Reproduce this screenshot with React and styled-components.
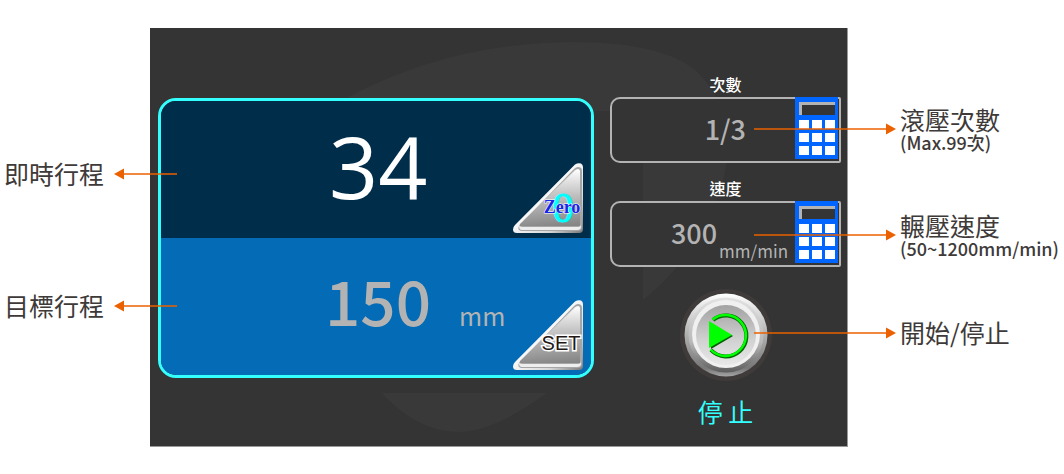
import React, { useState } from "react";
import styled, { createGlobalStyle } from "styled-components";

const GlobalStyle = createGlobalStyle`
  * {
    box-sizing: border-box;
  }
  body {
    margin: 0;
    background-color: #ffffff;
    font-family: "Noto Sans CJK TC", "Noto Sans", sans-serif;
  }
  button {
    border: none;
    padding: 0;
    background: none;
    cursor: pointer;
    font: inherit;
  }
  svg {
    display: block;
  }
`;

const Page = styled.main`
  display: grid;
  grid-template-columns: 150px minmax(0, 1fr) 216px;
  padding: 28px 0;
`;

const Notes = styled.aside`
  display: flex;
  flex-direction: column;
  position: relative;
  z-index: 1;
  pointer-events: none;
  color: #3e3a39;
  gap: ${({ $side }) => ($side === "left" ? "104px" : "63px")};
  padding-top: ${({ $side }) => ($side === "left" ? "132px" : "79px")};
  padding-left: ${({ $side }) => ($side === "left" ? "4px" : "0")};
  margin-left: ${({ $side }) => ($side === "left" ? "0" : "-94px")};
`;

const Note = styled.div`
  display: flex;
  align-items: center;
  min-height: 28px;
  gap: ${({ $gap }) => $gap}px;
  white-space: nowrap;
  svg {
    flex: none;
  }
  h3 {
    margin: 0;
    padding-bottom: 3px;
    font-size: 25px;
    line-height: 24px;
    font-weight: 400;
  }
  p {
    margin: 0;
    font-size: 18px;
    line-height: 16px;
    font-weight: 500;
  }
`;

const Device = styled.section`
  position: relative;
  display: grid;
  grid-template-columns: minmax(0, 436fr) minmax(0, 231fr);
  column-gap: 16px;
  padding: 47px 6px 20px 8px;
  background-color: #333433;
  border-right: 1px solid #999999;
  border-bottom: 1px solid #999999;
`;

const Watermark = styled.svg`
  position: absolute;
  inset: 0;
  width: 100%;
  height: 100%;
`;

const Stroke = styled.div`
  position: relative;
  align-self: start;
  margin-top: 23px;
  border: 3px solid #33ffff;
  border-radius: 18px;
  overflow: hidden;
`;

const Reading = styled.div`
  position: relative;
  display: flex;
  align-items: center;
  height: 137px;
  padding-bottom: 8px;
  padding-left: ${({ $indent }) => $indent}px;
  background-color: ${({ $target }) => ($target ? "#046cb6" : "#002d4a")};
  color: ${({ $target }) => ($target ? "#b3b3b3" : "#ffffff")};
  output {
    font-family: ${({ $target }) =>
      $target ? '"Noto Sans CJK TC", sans-serif' : '"Open Sans", "Noto Sans", sans-serif'};
    font-size: ${({ $target }) => ($target ? 62 : 86)}px;
    line-height: 88px;
    font-weight: 500;
  }
  &:has(small) {
    align-items: baseline;
    padding-top: 17px;
  }
  small {
    margin-left: 28px;
    font-size: 25px;
  }
`;

const CornerButton = styled.button`
  position: absolute;
  right: 8px;
  bottom: 4px;
`;

const Controls = styled.div`
  position: relative;
  display: flex;
  flex-direction: column;
  align-items: center;
`;

const FieldLabel = styled.label`
  padding-bottom: 3px;
  color: #ffffff;
  font-size: 16px;
  line-height: 19px;
  font-weight: 500;
`;

const Field = styled.div`
  display: flex;
  align-items: flex-start;
  width: 100%;
  height: 66px;
  margin-bottom: 16px;
  border: 2px solid #b3b3b3;
  border-radius: 10px 2px 2px 10px;
  background-color: #333433;
  color: #b3b3b3;
  input {
    flex: 1;
    min-width: 0;
    height: 62px;
    padding: 0 ${({ $inset }) => $inset}px 4px 0;
    border: none;
    outline: none;
    background: none;
    color: inherit;
    font: 500 27px "Noto Sans CJK TC", sans-serif;
    text-align: right;
  }
  span {
    align-self: flex-end;
    padding-right: 7px;
    font-size: 17px;
    line-height: 28px;
  }
  button {
    flex: none;
    margin-top: -2px;
    margin-right: 1px;
  }
`;

const StartButton = styled.button`
  margin-top: 6px;
  border-radius: 50%;
`;

const Status = styled.strong`
  margin-top: 16px;
  margin-bottom: 1px;
  color: #33ffff;
  font-size: 25px;
  line-height: 28px;
  font-weight: 400;
`;

const Arrow = ({ length, left }) => (
  <svg width={length} height="12" viewBox={`0 0 ${length} 12`} aria-hidden="true">
    <path
      d={left ? `M8 6H${length}` : `M0 6H${length - 8}`}
      stroke="#eb6100"
      strokeWidth="1.5"
    />
    <path
      d={left ? "M0 6L10 0.5V11.5Z" : `M${length} 6L${length - 10} 0.5V11.5Z`}
      fill="#eb6100"
    />
  </svg>
);

const Calculator = () => (
  <svg width="43" height="62" viewBox="0 0 43 62" aria-hidden="true">
    <path d="M0 0H43V62H0Z" fill="#0066ff" />
    <path d="M4 5H40V18H4Z" fill="#343534" />
    <path d="M4 5H40V8H7V18H4Z" fill="#b3b3b3" />
    {[23, 36, 49].map((y) =>
      [4, 17, 30].map((x) => (
        <rect key={`${x}-${y}`} x={x} y={y} width="10" height="9" fill="#ffffff" />
      ))
    )}
  </svg>
);

const Corner = ({ id, children }) => (
  <svg width="70" height="71" viewBox="0 0 70 71">
    <defs>
      <linearGradient id={`${id}-rim`} x1="0" y1="0" x2="1" y2="1">
        <stop offset="0.4" stopColor="#ffffff" />
        <stop offset="0.75" stopColor="#d8d8d8" />
        <stop offset="1" stopColor="#777777" />
      </linearGradient>
      <linearGradient id={`${id}-face`} x1="0.6" y1="0" x2="0.7" y2="1">
        <stop offset="0" stopColor="#f4f4f4" />
        <stop offset="0.45" stopColor="#c4c4c4" />
        <stop offset="1" stopColor="#858585" />
      </linearGradient>
      <linearGradient id={`${id}-shine`} x1="0" y1="0" x2="0" y2="1">
        <stop offset="0" stopColor="#ffffff" />
        <stop offset="1" stopColor="#c4c4c4" stopOpacity="0.3" />
      </linearGradient>
    </defs>
    <path
      d="M62 1.5Q65 -0.5 68 0.5Q70 1.5 70 4V66Q70 70 66 70H4Q0 70 0 66.5Q0 64 2 62Z"
      fill={`url(#${id}-rim)`}
    />
    <path d="M65 4Q69 4 69 8V64Q69 68 65 68H8Q4 67 6 63L61 6Q63 4 65 4Z" fill="#a6a6a6" />
    <path d="M65 6Q67 6 67 9V63H8Q6 63 7 61L62 7Q64 6 65 6Z" fill={`url(#${id}-face)`} />
    <path d="M67 8V32Q58 28 44 26L62 8Q65 5 67 8Z" fill={`url(#${id}-shine)`} />
    <path d="M6 63Q8 64 10 64H65Q68 64 68 61V64Q68 67 64 67H9Q6 67 6 63Z" fill="#eeeeee" />
    {children}
  </svg>
);

const PlayDial = () => (
  <svg width="92" height="92" viewBox="0 0 92 92" aria-hidden="true">
    <defs>
      <linearGradient id="dial-outer" x1="0" y1="0" x2="0" y2="1">
        <stop offset="0" stopColor="#ffffff" />
        <stop offset="0.5" stopColor="#b0b0b0" />
        <stop offset="0.9" stopColor="#777777" />
        <stop offset="1" stopColor="#a5a5a5" />
      </linearGradient>
      <linearGradient id="dial-middle" x1="0" y1="0" x2="0" y2="1">
        <stop offset="0" stopColor="#e2e2e2" />
        <stop offset="0.6" stopColor="#b8b8b8" />
        <stop offset="1" stopColor="#5c5c5c" />
      </linearGradient>
      <linearGradient id="dial-face" x1="0" y1="0" x2="0" y2="1">
        <stop offset="0" stopColor="#a2a2a2" />
        <stop offset="0.6" stopColor="#d2d2d2" />
        <stop offset="1" stopColor="#e8e8e8" />
      </linearGradient>
    </defs>
    <circle cx="46" cy="46" r="46" fill="#403b3b" />
    <circle cx="46" cy="46" r="41.5" fill="url(#dial-outer)" />
    <circle cx="46" cy="46" r="37.5" fill="url(#dial-middle)" />
    <circle cx="46" cy="45" r="34" fill="#f0f0f0" />
    <circle cx="46" cy="46" r="30" fill="url(#dial-face)" />
    <path d="M33 31A20.5 20.5 0 1 1 31 61" fill="none" stroke="#006b00" strokeWidth="4" />
    <path d="M32.5 30.5A20.5 20.5 0 1 1 30.5 60.5" fill="none" stroke="#00ff00" strokeWidth="2.5" />
    <path d="M30 34L53 47L31 60Z" fill="#005c00" />
    <path d="M29 32L52 46L29 59Z" fill="#00ff00" />
  </svg>
);

const App = () => {
  const [travel, setTravel] = useState(34);

  return (
    <>
      <GlobalStyle />
      <Page>
        <Notes $side="left">
          <Note $gap={10}>
            <h3>即時行程</h3>
            <Arrow length={63} left />
          </Note>
          <Note $gap={10}>
            <h3>目標行程</h3>
            <Arrow length={63} left />
          </Note>
        </Notes>

        <Device>
          <Watermark viewBox="0 0 697 418" preserveAspectRatio="none" aria-hidden="true">
            <path
              d="M195 71C270 30 350 14 425 14C485 14 525 25 545 42C590 82 585 150 550 205C535 232 515 255 493 272V83H195Z"
              fill="#383938"
            />
            <path d="M232 365H397C365 388 335 404 308 404C280 404 252 388 232 365Z" fill="#383938" />
          </Watermark>

          <Stroke>
            <Reading $indent={168}>
              <output aria-label="即時行程">{travel}</output>
              <CornerButton type="button" onClick={() => setTravel(0)}>
                <Corner id="zero">
                  <text
                    x="50"
                    y="59"
                    textAnchor="middle"
                    fontFamily="Liberation Serif, serif"
                    fontSize="43"
                    fill="#00ffff"
                    stroke="#00ffff"
                  >
                    0
                  </text>
                  <text
                    x="49"
                    y="50"
                    textAnchor="middle"
                    fontFamily="Liberation Serif, serif"
                    fontSize="18"
                    fontWeight="700"
                    fill="#1726e8"
                    stroke="#ffffff"
                    paintOrder="stroke"
                  >
                    Zero
                  </text>
                </Corner>
              </CornerButton>
            </Reading>
            <Reading $target $indent={164}>
              <output aria-label="目標行程">150</output>
              <small>mm</small>
              <CornerButton type="button">
                <Corner id="set">
                  <text
                    x="48"
                    y="50"
                    textAnchor="middle"
                    fontFamily="Liberation Sans, sans-serif"
                    fontSize="20"
                    fill="#231815"
                    stroke="#ffffff"
                    strokeWidth="3"
                    paintOrder="stroke"
                  >
                    SET
                  </text>
                </Corner>
              </CornerButton>
            </Reading>
          </Stroke>

          <Controls>
            <FieldLabel htmlFor="count">次數</FieldLabel>
            <Field $inset={49}>
              <input id="count" type="text" readOnly value="1/3" />
              <button type="button" aria-label="設定次數">
                <Calculator />
              </button>
            </Field>
            <FieldLabel htmlFor="speed">速度</FieldLabel>
            <Field $inset={2}>
              <input id="speed" type="text" readOnly value="300" />
              <span>mm/min</span>
              <button type="button" aria-label="設定速度">
                <Calculator />
              </button>
            </Field>
            <StartButton type="button" aria-label="開始/停止">
              <PlayDial />
            </StartButton>
            <Status>停 止</Status>
          </Controls>
        </Device>

        <Notes $side="right">
          <Note $gap={4}>
            <Arrow length={142} />
            <div>
              <h3>滾壓次數</h3>
              <p>(Max.99次)</p>
            </div>
          </Note>
          <Note $gap={4}>
            <Arrow length={142} />
            <div>
              <h3>輾壓速度</h3>
              <p>(50~1200mm/min)</p>
            </div>
          </Note>
          <Note $gap={4}>
            <Arrow length={142} />
            <h3>開始/停止</h3>
          </Note>
        </Notes>
      </Page>
    </>
  );
};

export default App;
